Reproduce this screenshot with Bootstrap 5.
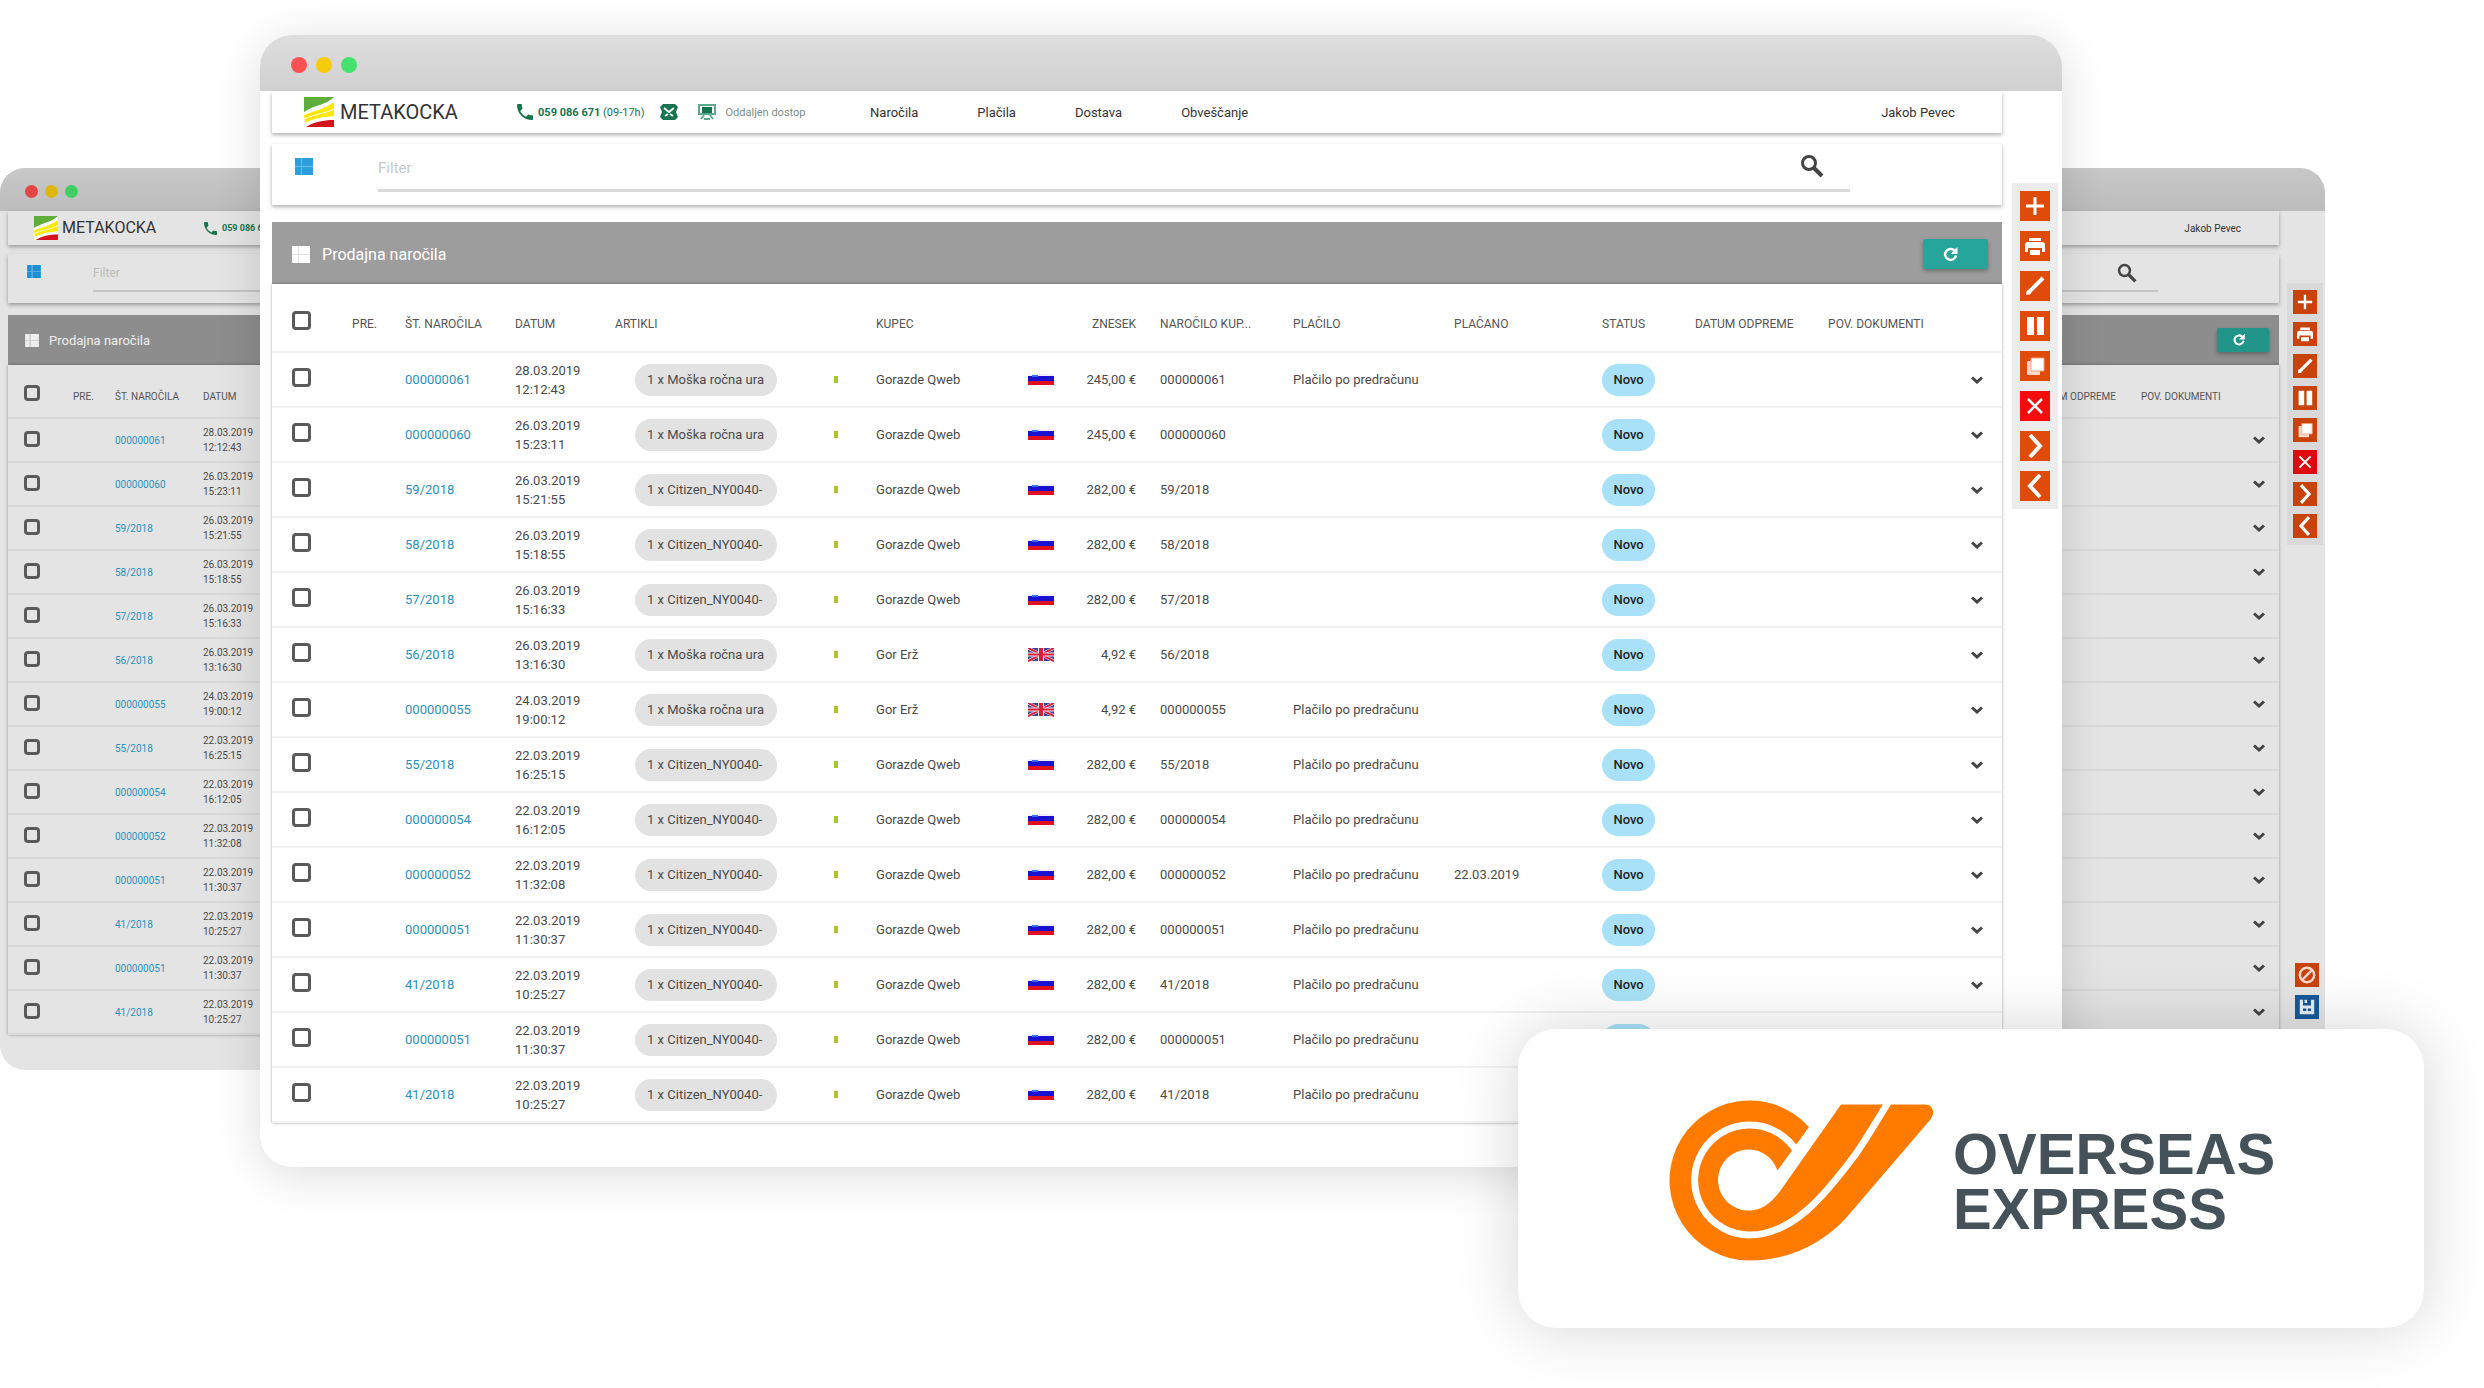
<!DOCTYPE html>
<html lang="sl">
<head>
<meta charset="utf-8">
<meta name="viewport" content="width=device-width, initial-scale=1">
<title>Metakocka – Overseas Express</title>
<link href="https://cdn.jsdelivr.net/npm/bootstrap@5.3.0/dist/css/bootstrap.min.css" rel="stylesheet">
<style>
body{font-family:Roboto,"Liberation Sans",sans-serif;background:#fff;color:#444;overflow-x:hidden}
.stage{min-height:1388px}

/* windows on the stage */
.win{--surf:#fff;--ink:#4a4a4a;--line:#f2f2f2;
  --fs:13px;--fs-th:12px;--fs-sm:11px;--fs-lg:16px;--fs-logo:20px;--lh:19px;
  position:absolute;background:var(--surf);color:var(--ink);font-size:var(--fs);line-height:var(--lh);overflow:hidden}
.win-front{top:35px;left:10.47%;right:17%;border-radius:32px}
.win-shadow{position:absolute;top:35px;left:10.47%;right:17%;height:1131px;border-radius:32px;box-shadow:0 8px 48px rgba(0,0,0,.14)}
.win-back{--surf:#e4e4e4;--line:#d9d9d9;
  --fs:10px;--fs-th:10px;--fs-sm:9px;--fs-lg:13px;--fs-logo:16px;--lh:15px;
  top:168px;left:0;right:6.4%;border-radius:25px}
.titlebar{height:56px;padding:4px 31px 0;gap:9px;background:linear-gradient(#dedede,#d0d0d0)}
.win-back .titlebar{height:43px;padding:4px 25px 0;gap:7px;background:linear-gradient(#c8c8c8,#bcbcbc)}
.tl{width:16px;height:16px;border-radius:50%}
.win-back .tl{width:13px;height:13px}
.tl-r{background:#fb5152}.tl-y{background:#f8cb0a}.tl-g{background:#45e270}
.win-back .tl-r{background:#e54545}.win-back .tl-y{background:#dfb510}.win-back .tl-g{background:#3fcf64}
.content{padding:0 0 44px 12px}
.win-back .content{padding:0 0 35px 8px}
.aside{width:61px}
.win-back .aside{width:47px}

.panel{background:var(--surf);box-shadow:0 2px 4px rgba(0,0,0,.32)}
.topbar{height:42px;padding:0 47px 0 32px;margin-bottom:11px}
.win-back .topbar{height:34px;padding:0 38px 0 26px;margin-bottom:9px}
.brand{font-size:var(--fs-logo);color:#333;gap:6px;width:213px;line-height:1}
.win-back .brand{width:170px;gap:4px}
.brand svg{width:30px;height:30px}
.win-back .brand svg{width:24px;height:24px}
.tel{font-size:var(--fs-sm);color:#16754f;gap:5px}
.tel svg{width:16px;height:16px}
.win-back .tel svg{width:13px;height:13px}
.topbar a{color:#333;text-decoration:none}
.topbar a.remote{color:#7c8f88;font-size:11px;margin-left:9px}
.contact{width:353px}
.ic20{width:20px;height:18px}
.ic-mail{margin:0 18px 0 14px}
.menu{gap:59px}
.filter{height:61px;padding:14px 23px 0;margin-bottom:17px}
.win-back .filter{height:49px;padding:11px 19px 0;margin-bottom:12px}
.grid-ic{width:18px;height:17px}
.win-back .grid-ic{width:14px;height:13px}
.searchline{margin-left:65px;width:1472px;height:34px;border-bottom:3px solid #dadada;padding-right:26px}
.win-back .searchline{margin:0 102px 0 52px;width:auto;flex:1;height:27px;border-bottom-width:2px;border-color:#c4c4c4;padding-right:21px}
.searchline input{border:0;outline:0;background:none;font-size:15px;line-height:20px;padding:0;height:20px;color:#555}
.win-back .searchline input{font-size:12px;height:16px}
.searchline input::placeholder{color:#c8c8c8;opacity:1}
.win-back .searchline input::placeholder{color:#bbb}
.searchline button{border:0;background:none;padding:0;line-height:0;height:24px;margin-top:-4px}
.searchline svg{width:24px;height:24px}
.win-back .searchline svg{width:20px;height:20px}
.listhead{height:62px;background:#9d9d9d;color:#fff;font-size:var(--fs-lg);padding:2px 14px 0 20px;gap:12px}
.win-back .listhead{height:50px;background:#8d8d8d;color:#eee;padding:0 10px 0 17px;gap:10px}
.refresh{width:65px;height:30px;border:0;border-radius:2px;background:#26a69a;box-shadow:0 2px 4px rgba(0,0,0,.3);padding:0 0 0 19px;line-height:0;text-align:left}
.win-back .refresh{width:52px;height:24px;background:#22958a;padding-left:15px}
.refresh svg{width:17px;height:17px}
.win-back .refresh svg{width:14px;height:14px}

/* order table */
.orders{table-layout:fixed;margin:0;width:100%;box-shadow:0 0 3px rgba(0,0,0,.35)}
.orders>:not(caption)>*>*{padding:0;background:var(--surf);color:var(--ink);border:0;border-bottom:2px solid var(--line);white-space:nowrap;vertical-align:middle}
.orders thead th{height:68px;font-size:var(--fs-th);font-weight:400;padding-top:14px;color:#555}
.orders thead th.ck{padding-top:6px}
.orders tbody td{height:55px}
.win-back .orders thead th{height:53px;padding-top:10px}
.win-back .orders thead th.ck{padding-top:4px}
.win-back .orders tbody td{height:44px}
.orders .ck{padding-left:20px}
.win-back .orders .ck{padding-left:16px}
.orders tbody .ck{padding-bottom:4px}
.win-back .orders tbody .ck{padding-bottom:2px}
.orders input{display:block;appearance:none;width:19px;height:19px;border:3px solid #5a5a5a;border-radius:4px;margin:0;background:transparent}
.win-back .orders input{width:16px;height:16px}
.orders a{color:#2a91bd;text-decoration:none}
.orders .num{text-align:right}
.orders .ref{padding-left:24px}
.orders tbody .art{padding-left:20px}
.chip{display:inline-block;width:142px;height:32px;line-height:32px;border-radius:16px;background:#e2e2e2;padding-left:12px}
.state{display:inline-block;width:53px;height:32px;line-height:32px;border-radius:16px;background:#a9e2f8;text-align:center;font-weight:500;color:#222}
.tick{display:block;width:4px;height:7px;margin-left:14px;background:#a9c62b}
.flag{display:block;width:26px;height:14px;margin-left:3px}
.orders .more{text-align:right;padding-right:19px;line-height:0}
.win-back .orders .more{padding-right:14px}
.more button{border:0;background:none;padding:0;line-height:0}
.more svg{width:12px;height:8px}

/* tool rail */
.rail{background:#ececec;margin:92px 4px 0 10px;padding:8px;gap:10px}
.win-back .rail{background:#d9d9d9;margin:72px 2px 0 8px;padding:7px 6px;gap:8px}
.win-back .rail-end{background:none;margin:auto 0 9px 10px}
.tool{border:0;padding:0;width:30px;height:30px;line-height:0;background:#e04a0a}
.win-back .tool{width:24px;height:24px;background:#c94209}
.tool svg{width:100%;height:100%}
.tool.del{background:#f60c0c}
.win-back .tool.del{background:#dc0a0f}
.win-back .tool.save{background:#17599a}

/* partner card */
.partner{position:absolute;top:1029px;left:61.1%;right:2.4%;height:299px;border-radius:38px;background:#fff;box-shadow:0 0 64px rgba(0,0,0,.17);gap:16px}
.partner svg{width:270px;height:164px}
.partner-name{font-family:"Liberation Sans",Arial,sans-serif;font-weight:700;font-size:58px;line-height:55px;color:#455259;padding-top:4px}
</style>
</head>
<body>
<svg width="0" height="0" class="d-none">
  <symbol id="i-brand" viewBox="0 0 30 30"><path fill="#fff" d="M0 0h30v30H0z"/><path fill="#5fae3c" d="M0 0h30C22 8 10 8 0 15z"/><path fill="#ffe800" d="M0 18C10 14 20 12 30 5v14C20 20 10 21 1 26z"/><path stroke="#fff" stroke-width="1" fill="none" d="M0 22c10-5 20-5 30-10"/><path fill="#d5141b" d="M2 30c8-5 17-7 28-7v7z"/></symbol>
  <symbol id="i-phone" viewBox="3 3 18 18"><path fill="#16754f" d="M6.6 10.8c1.4 2.8 3.8 5.1 6.6 6.6l2.2-2.2c.3-.3.7-.4 1-.2 1.1.4 2.3.6 3.6.6.6 0 1 .4 1 1V20c0 .6-.4 1-1 1C10.6 21 3 13.4 3 4c0-.6.5-1 1-1h3.5c.6 0 1 .5 1 1 0 1.3.2 2.5.6 3.600.1.3 0 .7-.2 1z"/></symbol>
  <symbol id="i-mail" viewBox="0 0 20 18"><path fill="#16754f" d="M1 4l3-3h12l3 3-2 5 2 5-3 3H4l-3-3 2-5z"/><path fill="none" stroke="#fff" stroke-width="2" d="M5 5l5 4 5-4M6 13l3-2M14 13l-3-2"/></symbol>
  <symbol id="i-screen" viewBox="0 0 20 18"><path fill="none" stroke="#5fa98b" stroke-width="2" d="M1 2h18M2 3v8h16V3M4 16l3-4M16 16l-3-4M7 16h6"/><path fill="#16754f" d="M5 4h10v6H5z"/></symbol>
  <symbol id="i-grid" viewBox="0 0 18 17"><path fill="currentColor" d="M0 0h6v8H0zM7 0h11v8H7zM0 9h6v8H0zM7 9h11v8H7z"/><path fill="currentColor" fill-opacity=".7" d="M0 8h18v1H0zM6 0h1v17H6z"/></symbol>
  <symbol id="i-search" viewBox="0 0 24 24"><circle cx="9" cy="9" r="6.5" fill="none" stroke="#444" stroke-width="3"/><path stroke="#444" stroke-width="4" d="M14 14l8 8"/></symbol>
  <symbol id="i-refresh" viewBox="0 0 17 17"><path fill="none" stroke="#fff" stroke-width="2.5" d="M12.500 4.500A5.500 5.500 0 1 0 14 9.500"/><path fill="#fff" d="M15.500 1v7H8.500z"/></symbol>
  <symbol id="i-down" viewBox="0 0 12 8"><path fill="none" stroke="#444" stroke-width="3" d="M1 1.500l5 4.500 5-4.500"/></symbol>
  <symbol id="i-add" viewBox="0 0 30 30"><path stroke="#fff" stroke-width="3" d="M15 6v18M6 15h18"/></symbol>
  <symbol id="i-print" viewBox="0 0 30 30"><path fill="#fff" d="M9 7h12v3H9zM8 11h14a3 3 0 0 1 3 3v7h-3v-4H8v4H5v-7a3 3 0 0 1 3-3zM10 19h10v5H10z"/></symbol>
  <symbol id="i-edit" viewBox="0 0 30 30"><path stroke="#fff" stroke-width="4" d="M8 22L23 7"/><path fill="#fff" d="M6 24l1-5 4 4z"/></symbol>
  <symbol id="i-cols" viewBox="0 0 30 30"><path fill="#fff" d="M7 6h7v18H7zM17 6h7v18h-7z"/></symbol>
  <symbol id="i-copy" viewBox="0 0 30 30"><path fill="#fff" fill-opacity=".8" d="M7 10h13v14H7z"/><path fill="#fff" stroke="#f0a080" d="M11 7h13v13H11z"/></symbol>
  <symbol id="i-del" viewBox="0 0 30 30"><path stroke="#fff" stroke-width="2.5" d="M8 8l14 14M22 8L8 22"/></symbol>
  <symbol id="i-next" viewBox="0 0 30 30"><path fill="none" stroke="#fff" stroke-width="4" d="M10 4l10 11-10 11"/></symbol>
  <symbol id="i-prev" viewBox="0 0 30 30"><path fill="none" stroke="#fff" stroke-width="4" d="M20 4L10 15l10 11"/></symbol>
  <symbol id="i-ban" viewBox="0 0 30 30"><circle cx="15" cy="15" r="9" fill="none" stroke="#f7d9cc" stroke-width="3"/><path stroke="#f7d9cc" stroke-width="3" d="M9 21L21 9"/></symbol>
  <symbol id="i-save" viewBox="0 0 30 30"><path fill="#e6eef5" d="M6 6h4v7h10V6h4v18H6z"/><path fill="#e6eef5" d="M12 6h3v4h-3z"/><path fill="#17599a" d="M10 17h4v3h-4zM16 17h4v3h-4z"/></symbol>
  <symbol id="f-si" viewBox="0 0 26 14"><path fill="#f0f0ff" d="M0 1h26v2H0z"/><path fill="#1a12d0" d="M0 3h26v5H0z"/><path fill="#e01020" d="M0 8h26v4H0z"/><path fill="#3a6cf4" d="M4 2h6v2H4z"/></symbol>
  <symbol id="f-gb" viewBox="0 0 26 14"><path fill="#3a4590" d="M0 0h26v13H0z"/><path stroke="#f2e6ee" stroke-width="3" d="M0 0l26 13M26 0L0 13"/><path stroke="#d8203c" stroke-width="2" d="M0 0l26 13M26 0L0 13"/><path stroke="#f2e6ee" stroke-width="6" d="M13 0v13"/><path stroke="#f2e6ee" stroke-width="4" d="M0 6.500h26"/><path stroke="#d8203c" stroke-width="4" d="M13 0v13"/><path stroke="#d8203c" stroke-width="2" d="M0 6.500h26"/></symbol>
</svg>

<main class="stage position-relative">

  <section class="win win-back" aria-label="Metakocka">
    <div class="titlebar d-flex align-items-center"><span class="tl tl-r"></span><span class="tl tl-y"></span><span class="tl tl-g"></span></div>
    <div class="content d-flex">
      <div class="flex-grow-1">
        <header class="panel topbar d-flex align-items-center">
          <div class="brand d-flex align-items-center"><svg><use href="#i-brand"/></svg><span>METAKOCKA</span></div>
          <div class="tel d-flex align-items-center"><svg><use href="#i-phone"/></svg><b>059 086 671</b></div>
          <a href="#" class="ms-auto">Jakob Pevec</a>
        </header>
        <div class="panel filter d-flex align-items-start">
          <svg class="grid-ic" color="#1b8fd8"><use href="#i-grid"/></svg>
          <div class="searchline d-flex align-items-start"><input class="flex-grow-1" placeholder="Filter" aria-label="Filter"><button aria-label="Išči"><svg><use href="#i-search"/></svg></button></div>
        </div>
        <div class="listhead d-flex align-items-center"><svg class="grid-ic"><use href="#i-grid"/></svg><span>Prodajna naročila</span><button class="refresh ms-auto" aria-label="Osveži"><svg><use href="#i-refresh"/></svg></button></div>
        <table class="table orders">
          <colgroup><col style="width:65px"><col style="width:42px"><col style="width:88px"><col><col style="width:107px"><col style="width:80px"><col style="width:58px"></colgroup>
          <thead><tr><th class="ck"><input type="checkbox" aria-label="Izberi vse"></th><th>PRE.</th><th>ŠT. NAROČILA</th><th>DATUM</th><th>DATUM ODPREME</th><th>POV. DOKUMENTI</th><th></th></tr></thead>
          <tbody id="rows-back"></tbody>
        </table>
      </div>
      <aside class="aside d-flex flex-column">
        <div class="rail d-flex flex-column" data-tools="add print edit cols copy del next prev"></div>
        <div class="rail rail-end d-flex flex-column" data-tools="ban save"></div>
      </aside>
    </div>
  </section>

  <div class="win-shadow"></div>
  <section class="win win-front" aria-label="Metakocka – Prodajna naročila">
    <div class="titlebar d-flex align-items-center"><span class="tl tl-r"></span><span class="tl tl-y"></span><span class="tl tl-g"></span></div>
    <div class="content d-flex">
      <div class="flex-grow-1">
        <header class="panel topbar d-flex align-items-center">
          <div class="brand d-flex align-items-center"><svg><use href="#i-brand"/></svg><span>METAKOCKA</span></div>
          <div class="contact d-flex align-items-center">
            <div class="tel d-flex align-items-center"><svg><use href="#i-phone"/></svg><span><b>059 086 671</b> (09-17h)</span></div>
            <svg class="ic20 ic-mail"><use href="#i-mail"/></svg>
            <svg class="ic20"><use href="#i-screen"/></svg>
            <a href="#" class="remote">Oddaljen dostop</a>
          </div>
          <nav class="menu d-flex"><a href="#">Naročila</a><a href="#">Plačila</a><a href="#">Dostava</a><a href="#">Obveščanje</a></nav>
          <a href="#" class="ms-auto">Jakob Pevec</a>
        </header>
        <div class="panel filter d-flex align-items-start">
          <svg class="grid-ic" color="#2a9fdc"><use href="#i-grid"/></svg>
          <div class="searchline d-flex align-items-start"><input class="flex-grow-1" placeholder="Filter" aria-label="Filter"><button aria-label="Išči"><svg><use href="#i-search"/></svg></button></div>
        </div>
        <div class="listhead d-flex align-items-center"><svg class="grid-ic"><use href="#i-grid"/></svg><span>Prodajna naročila</span><button class="refresh ms-auto" aria-label="Osveži"><svg><use href="#i-refresh"/></svg></button></div>
        <table class="table orders">
          <colgroup><col style="width:80px"><col style="width:53px"><col style="width:110px"><col style="width:100px"><col style="width:205px"><col style="width:56px"><col style="width:149px"><col style="width:45px"><col style="width:66px"><col style="width:157px"><col style="width:161px"><col style="width:148px"><col style="width:93px"><col style="width:133px"><col style="width:112px"><col></colgroup>
          <thead><tr><th class="ck"><input type="checkbox" aria-label="Izberi vse"></th><th>PRE.</th><th>ŠT. NAROČILA</th><th>DATUM</th><th>ARTIKLI</th><th></th><th>KUPEC</th><th></th><th class="num">ZNESEK</th><th class="ref">NAROČILO KUP...</th><th>PLAČILO</th><th>PLAČANO</th><th>STATUS</th><th>DATUM ODPREME</th><th>POV. DOKUMENTI</th><th></th></tr></thead>
          <tbody id="rows-front"></tbody>
        </table>
      </div>
      <aside class="aside"><div class="rail d-flex flex-column" data-tools="add print edit cols copy del next prev"></div></aside>
    </div>
  </section>

  <section class="partner d-flex align-items-center justify-content-center">
    <svg viewBox="26 37 270 164" role="img" aria-label="Overseas Express">
      <path fill="#ff7b00" d="M168 67A80 80 0 1 0 108 200.500C150 200.500 183 182 205 158L289 60C295 53 292 44.500 284 44.500H200L142 127Q126 151 108 150.500A30.500 30.500 0 1 1 136.500 110.500z"/>
      <path fill="none" stroke="#fff" stroke-width="7" d="M156 92A55 55 0 1 0 108 175C152 175 184 135 214 95Q222 84 248 41"/>
    </svg>
    <div class="partner-name">OVERSEAS<br>EXPRESS</div>
  </section>
</main>

<script>
const P = 'Plačilo po predračunu', M = '1 x Moška ročna ura', C = '1 x Citizen_NY0040-', G = 'Gorazde Qweb', E = 'Gor Erž';
const orders = [
  ['000000061','28.03.2019','12:12:43',M,G,'si','245,00',P,''],
  ['000000060','26.03.2019','15:23:11',M,G,'si','245,00','',''],
  ['59/2018','26.03.2019','15:21:55',C,G,'si','282,00','',''],
  ['58/2018','26.03.2019','15:18:55',C,G,'si','282,00','',''],
  ['57/2018','26.03.2019','15:16:33',C,G,'si','282,00','',''],
  ['56/2018','26.03.2019','13:16:30',M,E,'gb','4,92','',''],
  ['000000055','24.03.2019','19:00:12',M,E,'gb','4,92',P,''],
  ['55/2018','22.03.2019','16:25:15',C,G,'si','282,00',P,''],
  ['000000054','22.03.2019','16:12:05',C,G,'si','282,00',P,''],
  ['000000052','22.03.2019','11:32:08',C,G,'si','282,00',P,'22.03.2019'],
  ['000000051','22.03.2019','11:30:37',C,G,'si','282,00',P,''],
  ['41/2018','22.03.2019','10:25:27',C,G,'si','282,00',P,''],
  ['000000051','22.03.2019','11:30:37',C,G,'si','282,00',P,''],
  ['41/2018','22.03.2019','10:25:27',C,G,'si','282,00',P,'']
];
const lead4 = o => `<td class="ck"><input type="checkbox" aria-label="Izberi ${o[0]}"></td><td></td><td><a href="#">${o[0]}</a></td><td>${o[1]}<br>${o[2]}</td>`;
const more = '<td class="more"><button aria-label="Več"><svg><use href="#i-down"/></svg></button></td>';
document.getElementById('rows-front').innerHTML = orders.map((o, i) => `<tr>${lead4(o)}<td class="art"><span class="chip">${o[3]}</span></td><td><span class="tick"></span></td><td>${o[4]}</td><td><svg class="flag"><use href="#f-${o[5]}"/></svg></td><td class="num">${o[6]} €</td><td class="ref">${o[0]}</td><td>${o[7]}</td><td>${o[8]}</td><td>${i < 13 ? '<span class="state">Novo</span>' : ''}</td><td></td><td></td>${i < 12 ? more : '<td></td>'}</tr>`).join('');
document.getElementById('rows-back').innerHTML = orders.map(o => `<tr>${lead4(o)}<td></td><td></td>${more}</tr>`).join('');
document.querySelectorAll('[data-tools]').forEach(r => {
  r.innerHTML = r.dataset.tools.split(' ').map(t => `<button class="tool ${t}" aria-label="${t}"><svg><use href="#i-${t}"/></svg></button>`).join('');
});
</script>
<script src="https://cdn.jsdelivr.net/npm/bootstrap@5.3.0/dist/js/bootstrap.bundle.min.js"></script>
</body>
</html>
